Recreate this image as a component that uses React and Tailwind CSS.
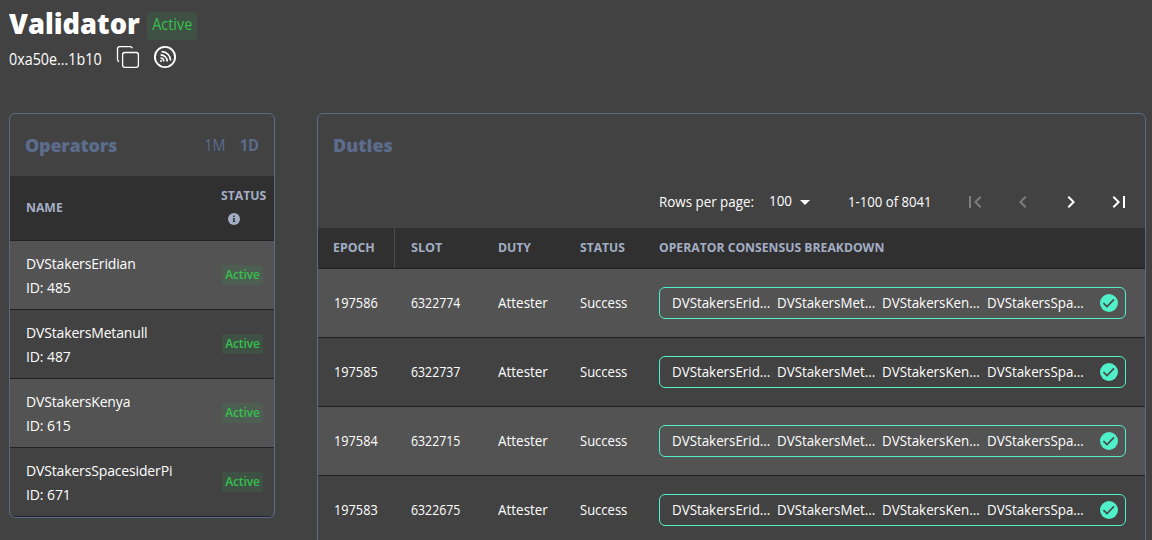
const operators = [
  { name: 'DVStakersEridian', id: 485 },
  { name: 'DVStakersMetanull', id: 487 },
  { name: 'DVStakersKenya', id: 615 },
  { name: 'DVStakersSpacesiderPi', id: 671 },
];

const duties = [
  { epoch: 197586, slot: 6322774 },
  { epoch: 197585, slot: 6322737 },
  { epoch: 197584, slot: 6322715 },
  { epoch: 197583, slot: 6322675 },
];

const signers = ['DVStakersErid...', 'DVStakersMet...', 'DVStakersKen...', 'DVStakersSpa...'];

function CopyIcon() {
  return (
    <svg className="size-6" viewBox="0 0 24 24" fill="none" stroke="#fff" strokeWidth="1.3">
      <rect x="6.6" y="7.5" width="15.8" height="14.8" rx="2.2" />
      <path d="M3.2 16.5A2 2 0 0 1 1.5 14.5V4A2.4 2.4 0 0 1 3.9 1.6h10.4A2.2 2.2 0 0 1 16.3 3.2" />
    </svg>
  );
}

function BeaconIcon() {
  return (
    <svg className="size-6" viewBox="0 0 24 24" fill="none" stroke="#fff" strokeWidth="1.7">
      <circle cx="12" cy="12" r="10.1" strokeWidth="1.9" />
      <path d="M8.6 6.6a9 9 0 0 1 9 9M7.6 9.8a6.6 6.6 0 0 1 6.6 6.6M7.4 13a3.6 3.6 0 0 1 3.4 3.6" />
      <circle cx="8" cy="16" r="1" fill="#fff" stroke="none" />
    </svg>
  );
}

function PageIcon({ d, dim }) {
  return (
    <svg className={dim ? 'size-6 text-[#7d7d7d]' : 'size-6 text-white'} viewBox="0 0 24 24" fill="currentColor">
      <path d={d} />
    </svg>
  );
}

function CheckIcon() {
  return (
    <svg className="size-[18px] shrink-0" viewBox="0 0 18 18">
      <circle cx="9" cy="9" r="9" fill="#50f0c8" />
      <path d="M3.4 9.2 7 12.6 14 5.4" fill="none" stroke="#484848" strokeWidth="1.6" />
    </svg>
  );
}

export default function App() {
  return (
    <div className="h-[540px] overflow-hidden bg-[#424242] pl-[9px] pr-1.5 text-white font-['Open_Sans','Noto_Sans',sans-serif]">
      <header className="h-[113px] pt-[5px]">
        <div className="flex h-9 items-center">
          <h1 className="w-[138px] origin-left scale-x-[0.94] whitespace-nowrap text-[29px] font-extrabold leading-9">Validator</h1>
          <span className="mt-[5px] flex h-7 w-[50px] items-center justify-center rounded bg-[#3f5045] pb-[3px] text-base text-[#35c04c]">
            <span className="scale-x-[0.9]">Active</span>
          </span>
        </div>
        <div className="flex h-8 items-center">
          <span className="w-[107px] origin-left scale-x-[0.895] whitespace-nowrap pt-1 text-base">0xa50e...1b10</span>
          <CopyIcon />
          <span className="ml-[13px]"><BeaconIcon /></span>
        </div>
      </header>
      <main className="flex items-start gap-[42px]">
        <section className="w-[266px] shrink-0 overflow-hidden rounded-md border border-[#5d6b88]">
          <div className="flex h-[62px] items-center px-[15px] text-[#5b6c8c]">
            <h2 className="flex-1 text-lg font-extrabold tracking-[-0.25px]">Operators</h2>
            <span className="mr-3 origin-right scale-x-[0.9] text-base">1M</span>
            <span className="origin-right scale-x-[0.92] text-base font-bold">1D</span>
          </div>
          <div className="flex h-[65px] items-center border-b border-[#20222b] bg-[#303030] pl-4 text-[13px] font-bold text-[#a3aec4]">
            <span className="w-[195px] origin-left scale-x-[0.94]">NAME</span>
            <div className="-mt-0.5 flex flex-col">
              <span className="origin-left scale-x-[0.94] leading-6">STATUS</span>
              <span className="flex h-6 items-center pl-[7px]">
                <svg className="size-3" viewBox="0 0 12 12">
                  <circle cx="6" cy="6" r="6" fill="#a3aec4" />
                  <path d="M5.2 2.5h1.6v1.5H5.2zM4.8 5h2v3.2h.5V9H4.8v-.8h.4V5.8h-.4z" fill="#303030" />
                </svg>
              </span>
            </div>
          </div>
          {operators.map((o, i) => (
            <div key={o.id} className={`flex h-[69px] items-center border-b border-[#20222b] pl-4 ${i % 2 ? '' : 'bg-[#535353]'}`}>
              <div className="w-[196px] whitespace-nowrap pt-0.5 text-sm leading-6">
                <p className="tracking-[-0.15px]">{o.name}</p>
                <p className="tracking-[-0.1px]">ID: {o.id}</p>
              </div>
              <span className={`flex h-5 w-[41px] items-center justify-center rounded-xs text-xs font-semibold tracking-[-0.1px] text-[#35c04c] ${i % 2 ? 'bg-[#3f5045]' : 'bg-[#4e5e52]'}`}>Active</span>
            </div>
          ))}
        </section>
        <section className="h-[440px] w-[829px] shrink-0 overflow-hidden rounded-t-md border border-[#5d6b88]">
          <h2 className="flex h-[62px] items-center pl-[15px] text-lg font-extrabold text-[#5b6c8c]">Duties</h2>
          <div className="flex h-[52px] items-center pl-[341px] text-sm">
            <span className="w-[110px] origin-left scale-x-[0.955] whitespace-nowrap">Rows per page:</span>
            <span className="w-6 origin-left scale-x-[0.96] pb-0.5">100</span>
            <svg className="size-6" viewBox="0 0 24 24" fill="#fff"><path d="m7 10 5 5 5-5z" /></svg>
            <span className="ml-[31px] w-[115px] origin-left scale-x-[0.94] whitespace-nowrap">1-100 of 8041</span>
            <div className="flex gap-6">
              <PageIcon dim d="M18.41 16.59 13.82 12l4.59-4.59L17 6l-6 6 6 6zM6 6h2v12H6z" />
              <PageIcon dim d="M15.41 7.41 14 6l-6 6 6 6 1.41-1.41L10.83 12z" />
              <PageIcon d="M10 6 8.59 7.41 13.17 12l-4.58 4.59L10 18l6-6z" />
              <PageIcon d="M5.59 7.41 10.18 12l-4.59 4.59L7 18l6-6-6-6zM16 6h2v12h-2z" />
            </div>
          </div>
          <div className="grid h-[41px] grid-cols-[77px_87px_82px_79px_1fr] items-center border-b border-[#20222b] bg-[#303030] text-[13px] font-bold text-[#a3aec4]">
            <span className="flex h-10 items-center border-r border-[#4a4a4a] pl-[15px]"><span className="origin-left scale-x-[0.95]">EPOCH</span></span>
            <span className="ml-4 origin-left scale-x-[0.97]">SLOT</span>
            <span className="ml-4 origin-left scale-x-[0.94]">DUTY</span>
            <span className="ml-4 origin-left scale-x-[0.93]">STATUS</span>
            <span className="ml-4 origin-left scale-x-[0.938]">OPERATOR CONSENSUS BREAKDOWN</span>
          </div>
          {duties.map((d, i) => (
            <div key={d.epoch} className={`grid h-[69px] grid-cols-[77px_87px_82px_79px_1fr] items-center border-b border-[#20222b] text-sm ${i % 2 ? '' : 'bg-[#535353]'}`}>
              <span className="ml-4 origin-left scale-x-[0.91]">{d.epoch}</span>
              <span className="ml-4 origin-left scale-x-[0.88]">{d.slot}</span>
              <span className="ml-4 origin-left scale-x-[0.96]">Attester</span>
              <span className="ml-4 origin-left scale-x-[0.93]">Success</span>
              <div className="ml-4 flex h-8 w-[467px] items-center rounded-md border border-[#50f0c8] pl-3">
                {signers.map((s) => (
                  <span key={s} className="w-[105px] shrink-0 origin-left scale-x-[0.953] whitespace-nowrap">{s}</span>
                ))}
                <span className="ml-2"><CheckIcon /></span>
              </div>
            </div>
          ))}
        </section>
      </main>
    </div>
  );
}
